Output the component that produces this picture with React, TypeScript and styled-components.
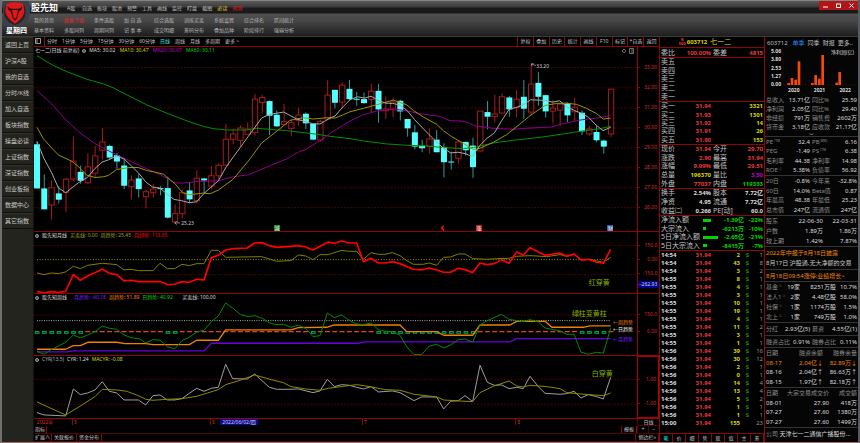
import React from "react";
import styled, { createGlobalStyle } from "styled-components";

const GlobalStyle = createGlobalStyle`
  * { box-sizing: border-box; }
  html, body { margin: 0; background: #000; }
  body { font-family: "Noto Sans", "Noto Sans CJK SC", sans-serif; }
  button {
    appearance: none; border: 0; margin: 0; padding: 0; background: none;
    font: inherit; color: inherit; cursor: pointer; white-space: nowrap;
  }
`;

const RED = "#e83a3a";
const LINE = "#8a0808";
const YELLOW = "#d6d600";
const GREEN = "#00d400";
const MAGENTA = "#c400c4";
const WHITE = "#dcdcdc";

const share = (weight: number) => `${weight} ${weight} ${weight}px`;

/* ---------- frame ---------- */

const Shell = styled.div`
  height: 100vh;
  display: flex;
  flex-direction: column;
  overflow: hidden;
  border-left: 2px solid #70706c;
  border-right: 2px solid #555b60;
  border-bottom: 1px solid #9a7070;
  background: #000;
  color: ${WHITE};
`;

const Header = styled.header`
  flex: 0 0 37px;
  display: grid;
  grid-template-columns: 29px minmax(0, 1fr);
  border-top: 1px solid #85857f;
  border-bottom: 1px solid #3a3a3a;
  background: linear-gradient(#5a5a5a 0, #3a3a3a 6px, #1b1b1b 7px, #191919 12px, #505050 13px, #464646 20px, #1e1e1e 35px);
`;

const Brand = styled.div`
  display: flex;
  flex-direction: column;
  align-items: center;
  font-size: 7px;
  line-height: 10px;
  font-weight: 700;
  color: #fff;
`;

const LogoSvg = styled.svg`
  display: block;
  width: 28px;
  height: 25px;
`;

const HeaderRows = styled.div`
  display: flex;
  flex-direction: column;
`;

const TitleRow = styled.div`
  display: flex;
  height: 13px;
`;

const AppName = styled.h1`
  margin: 0;
  width: 36px;
  font-size: 9px;
  line-height: 13px;
  font-weight: 700;
  color: #fff;
`;

const Menu = styled.nav`
  display: flex;
  gap: 5px;
  font-size: 5px;
  line-height: 14px;
`;

const MenuItem = styled.button<{ $color?: string }>`
  min-width: 10px;
  text-align: left;
  color: ${(p) => p.$color ?? "#c0c0c0"};
`;

const WindowButtons = styled.div`
  display: flex;
  margin-left: auto;
  height: 9px;
  background: #b01616;
`;

const WindowButton = styled.button`
  width: 13px;
  display: grid;
  place-items: center;
  svg { display: block; width: 7px; height: 7px; }
`;

const ToolGrid = styled.nav`
  display: grid;
  grid-template-columns: repeat(9, 30px);
  grid-auto-rows: 10px;
  padding: 1px 0 0 3px;
  font-size: 5px;
  line-height: 10px;
`;

const ToolItem = styled.button<{ $hot?: boolean }>`
  text-align: left;
  color: ${(p) => (p.$hot ? "#e02828" : "#b8b8b8")};
`;

const Body = styled.div`
  flex: 1;
  min-height: 0;
  display: grid;
  grid-template-columns: 32px minmax(0, 1fr) 106px 93px;
`;

const Sidebar = styled.nav`
  display: grid;
  grid-template-rows: repeat(12, minmax(0, 16fr)) 212fr;
  background: #24241e;
  border-right: 1px solid #14140f;
`;

const SideItem = styled.button`
  border-bottom: 1px solid #0e0e0b;
  border-top: 1px solid #33332c;
  font-size: 6px;
  line-height: 8px;
  text-align: left;
  padding-left: 3px;
  color: #cacac4;
`;

/* ---------- charts column ---------- */

const Charts = styled.main`
  display: flex;
  flex-direction: column;
  min-width: 0;
  min-height: 0;
  font-size: 5px;
  line-height: 7px;
`;

const TabBar = styled.div`
  flex: ${share(10)};
  min-height: 0;
  display: flex;
  align-items: stretch;
  border-bottom: 1px solid ${LINE};
`;

const PeriodTabs = styled.div`
  display: flex;
  gap: 5px;
  padding-left: 2px;
  border-left: 1px solid ${LINE};
`;

const BarIcon = styled.svg`
  display: block;
  width: 6px;
  height: 6px;
  margin: 1px 3px 0 1px;
`;

const PeriodTab = styled.button<{ $active?: boolean }>`
  color: ${(p) => (p.$active ? "#38e8e8" : "#c4c4c4")};
`;

const ActionTabs = styled.div`
  margin-left: auto;
  flex: 0 0 142px;
  display: grid;
  grid-template-columns: repeat(9, 1fr);
`;

const ActionTab = styled.button`
  border-left: 1px solid ${LINE};
  color: #c8c8c8;
`;

const Pane = styled.section<{ $weight: number }>`
  flex: ${(p) => share(p.$weight)};
  min-height: 0;
  display: grid;
  grid-template-columns: minmax(0, 1fr) 22px;
  grid-template-rows: minmax(0, 1fr);
  border-bottom: 1px solid ${LINE};
`;

const Plot = styled.div`
  position: relative;
  min-height: 0;
`;

const PlotSvg = styled.svg`
  position: absolute;
  inset: 0;
  width: 100%;
  height: 100%;
`;

const Caption = styled.div`
  position: absolute;
  left: 1px;
  top: 0;
  display: flex;
  gap: 3px;
  align-items: center;
  white-space: pre;
`;

const CaptionDot = styled.i`
  width: 4px;
  height: 4px;
  border-radius: 50%;
  border: 1px solid #999;
  background: #444;
`;

const Tint = styled.span<{ $color: string }>`
  color: ${(p) => p.$color};
`;

const Note = styled.span<{ $x: string; $y: string; $color: string; $size?: number }>`
  position: absolute;
  left: ${(p) => p.$x};
  top: ${(p) => p.$y};
  font-size: ${(p) => p.$size ?? 5}px;
  line-height: 8px;
  margin-top: -4px;
  color: ${(p) => p.$color};
  white-space: nowrap;
`;

const CornerIcons = styled.svg`
  position: absolute;
  right: 2px;
  top: 1px;
  width: 14px;
  height: 6px;
`;

const Badge = styled(Note)<{ $bg: string }>`
  width: 6px;
  height: 6px;
  margin: -3px 0 0 -3px;
  line-height: 6px;
  text-align: center;
  background: ${(p) => p.$bg};
`;

const Axis = styled.div<{ $rows: string; $boxed?: boolean }>`
  display: grid;
  grid-template-rows: ${(p) => p.$rows};
  border-left: 1px solid ${LINE};
  ${(p) => p.$boxed && `border: 1px solid #b00000;`}
`;

const AxisLabel = styled.span<{ $row?: number; $marked?: boolean }>`
  grid-row: ${(p) => p.$row ?? "auto"};
  align-self: center;
  display: flex;
  align-items: center;
  justify-content: space-between;
  padding-right: 2px;
  color: ${(p) => (p.$marked ? "#d8d8f0" : "#dc2c2c")};
  background: ${(p) => (p.$marked ? "#00008c" : "none")};
  &::before { content: ""; width: 2px; height: 1px; background: ${LINE}; }
`;

const TimeRow = styled.div`
  flex: ${share(7)};
  min-height: 0;
  display: grid;
  grid-template-columns: minmax(0, 1fr) 22px;
  color: #dc2c2c;
`;

const TimeTrack = styled.div`
  position: relative;
`;

const TimeMark = styled.span<{ $marked?: boolean; $tick?: boolean }>`
  position: absolute;
  top: 0;
  line-height: 6px;
  padding-left: 1px;
  white-space: nowrap;
  ${(p) => p.$tick && `border-left: 1px solid ${LINE};`}
  ${(p) => p.$marked && `background: #0a0a96; color: #c8c8f0; padding: 0 2px;`}
`;

const AxisCell = styled.button`
  border: 1px solid #500505;
  border-width: 0 0 1px 1px;
  color: #c4c4c4;
  line-height: 6px;
`;

const FooterRow = styled.div`
  flex: ${share(8)};
  min-height: 0;
  display: flex;
  border-bottom: 1px solid #500505;
`;

const FooterTab = styled.button<{ $push?: boolean }>`
  padding: 0 1px;
  border-right: 1px solid ${LINE};
  margin-left: ${(p) => (p.$push ? "auto" : "0")};
  ${(p) => p.$push && `border-left: 1px solid ${LINE};`}
  color: #c8c8c8;
  & + & { padding: 0 2px; }
`;

const ZoomButton = styled.button`
  width: 11px;
  border-left: 1px solid #500505;
  color: #ccc;
`;

/* ---------- quote column ---------- */

const Quote = styled.aside`
  display: flex;
  flex-direction: column;
  min-height: 0;
  border: 1px solid ${LINE};
  border-width: 0 1px;
  font-size: 6px;
  line-height: 8px;
  font-weight: 700;
`;

const QuoteTitle = styled.h2`
  flex: ${share(11)};
  min-height: 0;
  margin: 0;
  padding-right: 14px;
  display: flex;
  align-items: center;
  justify-content: center;
  gap: 1px;
  font-size: 6px;
  border-bottom: 1px solid ${LINE};
  color: ${YELLOW};
  span { margin-left: 2px; font-size: 7px; font-weight: 400; }
`;

const RiskMark = styled.small`
  font-size: 4px;
  line-height: 4px;
  text-align: center;
  color: ${RED};
  width: 7px;
`;

const Table = styled.table<{ $weight: number; $cols: string; $line?: string }>`
  flex: ${(p) => share(p.$weight)};
  min-height: 0;
  display: flex;
  flex-direction: column;
  border-bottom: 1px solid ${(p) => p.$line ?? LINE};
  tbody { flex: 1; min-height: 0; display: grid; grid-auto-rows: minmax(0, 1fr); }
  tr { display: grid; grid-template-columns: ${(p) => p.$cols}; align-items: center; }
`;

const Label = styled.th<{ $right?: boolean; $small?: boolean }>`
  padding: 0 1px;
  font-size: ${(p) => (p.$small ? 6 : 7)}px;
  font-weight: 400;
  text-align: ${(p) => (p.$right ? "right" : "left")};
  white-space: nowrap;
  color: ${(p) => (p.$small ? "#8c8c8c" : "#c4c4c4")};
  sup { font-size: 3px; line-height: 3px; vertical-align: 2px; margin-left: 1px; }
`;

const Value = styled.td<{ $color?: string; $left?: boolean; $light?: boolean }>`
  padding: 0 1px 0 ${(p) => (p.$left ? 1 : 0)}px;
  text-align: ${(p) => (p.$left ? "left" : "right")};
  white-space: nowrap;
  font-weight: ${(p) => (p.$light ? 400 : "inherit")};
  color: ${(p) => p.$color ?? WHITE};
`;

const FlowBar = styled.i`
  display: block;
  height: 3px;
  background: ${GREEN};
`;

const Spacer = styled.div<{ $weight: number }>`
  flex: ${(p) => share(p.$weight)};
`;

const QuoteTabs = styled.div`
  flex: ${share(9)};
  min-height: 0;
  display: grid;
  grid-template-columns: repeat(8, 1fr);
  border-top: 1px solid ${LINE};
  font-weight: 400;
`;

const QuoteTab = styled.button<{ $active?: boolean }>`
  border-right: 1px solid ${LINE};
  font-size: 5px;
  line-height: 7px;
  color: ${(p) => (p.$active ? "#30e0e0" : "#c0c0c0")};
`;

/* ---------- info column ---------- */

const RULE = "#333";

const Info = styled.aside`
  display: flex;
  flex-direction: column;
  min-height: 0;
  overflow: hidden;
  background: #050505;
  font-size: 6px;
  line-height: 8px;
`;

const InfoTabs = styled.div`
  flex: ${share(11)};
  min-height: 0;
  display: flex;
  align-items: center;
  gap: 3px;
  padding-left: 2px;
  color: #bbb;
  white-space: nowrap;
  strong { font-weight: 400; margin-right: 2px; }
`;

const InfoTab = styled.button<{ $active?: boolean }>`
  color: ${(p) => (p.$active ? "#2c84e8" : "#bbb")};
`;

const Profit = styled.figure`
  flex: ${share(47)};
  min-height: 0;
  margin: 0;
  padding-bottom: 2px;
  position: relative;
  display: grid;
  grid-template-columns: 16px minmax(0, 1fr);
  grid-template-rows: minmax(0, 1fr) 6px;
  font-size: 5px;
  line-height: 6px;
  font-weight: 700;
`;

const ProfitAxis = styled.div`
  display: flex;
  flex-direction: column;
  justify-content: space-between;
  text-align: right;
`;

const ProfitYears = styled.div`
  grid-column: 2;
  display: grid;
  grid-template-columns: repeat(3, 1fr);
  text-align: center;
`;

const ProfitLegend = styled.figcaption`
  position: absolute;
  right: 4px;
  top: 1px;
  font-weight: 400;
`;

const ProfitPlot = styled.div`
  position: relative;
`;

const More = styled.button`
  flex: ${share(4)};
  min-height: 0;
  border-bottom: 1px solid ${RULE};
  display: grid;
  place-items: center;
  svg { display: block; width: 5px; height: 3px; }
`;

const NewsBlock = styled.div<{ $weight: number }>`
  flex: ${(p) => share(p.$weight)};
  min-height: 0;
  display: flex;
  flex-direction: column;
  justify-content: space-evenly;
  border-bottom: 1px solid ${RULE};
  padding-left: 1px;
`;

const NewsLink = styled.a<{ $hot?: boolean }>`
  color: ${(p) => (p.$hot ? "#f08a0a" : "#c8c8c8")};
  text-decoration: none;
  white-space: nowrap;
`;

const Company = styled.div`
  flex: ${share(14)};
  min-height: 0;
  overflow: hidden;
  padding: 2px 0 0 1px;
  white-space: nowrap;
  color: ${WHITE};
`;

/* ---------- data (plot units: three per pixel) ---------- */

const STEP = 21.8;
const X0 = 111;
const barX = (i: number) => X0 + STEP * i;

// [rising, high, body top, body bottom, low]
const candles: number[][] = [
  [0,305,314,447,447],[0,405,447,510,510],[1,423,445,497,540],[0,440,462,481,492],[1,415,419,459,519],
  [1,291,365,419,425],[0,378,397,424,433],[1,341,382,430,434],[1,320,349,401,412],[1,265,307,332,360],
  [0,315,319,354,360],[0,340,347,366,388],[0,355,378,439,449],[1,408,422,442,480],[0,404,417,449,474],
  [1,450,457,472,507],[1,434,449,460,474],[0,440,446,449,468],[0,412,446,535,538],[1,495,523,548,550],
  [1,450,460,523,538],[0,428,453,480,492],[1,392,416,484,492],[0,415,417,423,462],[1,380,409,440,450],
  [1,372,377,409,420],[1,253,299,377,377],[1,267,283,299,314],[1,257,265,302,320],[1,248,268,284,285],
  [1,162,178,278,288],[1,165,173,188,221],[0,182,184,228,286],[0,212,225,260,262],[1,192,246,254,256],
  [1,237,249,266,290],[1,204,226,242,258],[0,218,222,251,268],[0,250,252,300,302],[1,240,245,301,307],
  [1,121,166,238,242],[0,150,150,189,206],[1,128,136,187,205],[0,120,147,178,181],[0,157,177,180,198],
  [0,158,178,190,192],[1,132,154,179,218],[0,132,153,209,249],[1,170,208,213,238],[1,173,187,210,233],
  [0,180,183,215,242],[0,238,238,266,291],[0,256,278,321,329],[0,300,318,326,338],[1,267,298,320,342],
  [0,271,300,338,338],[0,311,322,368,414],[0,336,366,369,390],[1,303,307,356,372],[0,306,307,332,348],
  [0,294,318,383,415],[1,214,214,334,336],[0,184,217,231,269],[1,165,223,230,248],[1,160,171,220,222],
  [0,168,173,209,231],[1,151,178,203,233],[0,120,171,207,237],[1,75,133,217,228],[0,96,129,171,198],
  [0,165,166,215,234],[1,180,205,214,251],[1,190,193,211,258],[0,188,191,227,247],[1,174,202,216,244],
  [0,212,219,275,286],[1,258,268,283,290],[0,256,277,302,308],[0,300,303,321,342],[1,148,148,283,293],
];

const ma60 = "111,47 155,74 200,95 260,118 310,132 340,144 400,175 440,195 480,212 530,232 570,247 610,260 640,267 680,271 740,271 770,266 810,269 860,273 960,285 990,290 1050,297 1090,304 1160,313 1220,317 1280,319 1330,324 1390,327 1420,324 1480,310 1540,302 1620,293 1690,283 1740,275 1800,267 1832,260";
const ma20 = "111,152 155,192 195,238 235,276 285,312 330,336 400,369 440,388 480,405 525,430 550,431 590,426 655,424 700,412 745,406 800,383 860,358 895,338 920,328 960,303 1000,275 1050,244 1090,225 1130,214 1180,208 1220,213 1260,222 1320,230 1350,243 1385,244 1405,249 1425,259 1440,260 1480,266 1540,269 1590,265 1655,262 1690,252 1740,241 1790,235 1815,231 1832,226";
const ma10 = "111,263 130,297 155,325 175,346 215,365 235,381 260,407 285,414 310,412 325,408 350,390 390,384 415,384 440,393 460,397 490,404 525,433 548,460 568,466 610,461 630,463 655,452 700,419 750,358 785,310 840,267 870,242 910,234 940,238 980,234 1005,235 1030,225 1050,216 1090,206 1130,195 1180,181 1220,195 1240,212 1270,232 1310,254 1330,273 1355,291 1390,311 1420,330 1440,326 1480,308 1520,285 1560,253 1590,228 1635,197 1670,191 1700,190 1730,194 1760,206 1790,222 1810,238 1832,235";
const ma5 = "111,306 132,357 155,400 175,445 197,460 235,430 262,414 285,387 306,368 325,361 350,350 372,358 395,380 415,400 437,427 458,443 480,446 500,463 522,480 545,484 568,490 590,487 610,464 632,444 655,424 677,385 700,352 745,290 785,235 808,224 851,217 890,238 938,252 960,253 990,235 1005,229 1030,200 1050,180 1072,171 1095,175 1113,169 1135,182 1157,190 1178,191 1200,196 1222,213 1244,240 1287,285 1310,307 1330,326 1352,340 1374,338 1395,342 1417,351 1439,318 1461,296 1483,280 1505,243 1527,209 1549,203 1570,195 1592,180 1636,182 1657,187 1679,183 1701,202 1723,212 1745,221 1766,233 1788,256 1809,273 1832,263";

const monthYellow = "111,147 132,152 154,147 175,149 197,144 220,127 241,134 263,124 307,118 350,122 372,138 393,136 415,140 459,140 480,118 502,134 524,134 546,121 568,125 590,119 612,119 634,79 655,79 677,100 785,98 830,112 873,110 895,93 917,96 939,107 960,92 985,92 1025,79 1045,82 1070,82 1090,106 1113,86 1135,91 1155,91 1177,86 1200,95 1220,110 1240,121 1270,121 1287,117 1310,124 1331,100 1352,99 1375,90 1395,90 1418,104 1460,106 1490,104 1527,103 1550,97 1590,95 1640,98 1680,92 1700,97 1722,91 1743,108 1770,106 1790,111 1810,115 1832,100";
const monthRed = "111,203 132,207 154,203 175,206 197,202 220,152 241,169 263,156 307,136 328,148 350,152 372,171 393,169 415,173 480,173 502,182 524,181 546,173 568,175 590,166 612,168 634,101 655,94 677,78 700,74 742,72 764,57 787,56 808,65 830,70 873,67 895,65 917,69 939,78 985,54 1003,58 1025,51 1048,57 1070,57 1090,113 1113,103 1135,117 1157,117 1177,113 1200,119 1220,128 1240,136 1265,138 1287,132 1310,138 1331,145 1352,145 1375,133 1395,137 1418,146 1440,117 1460,122 1483,119 1505,107 1527,118 1550,84 1570,93 1590,71 1635,94 1680,87 1700,97 1722,90 1743,108 1765,106 1790,115 1810,118 1832,76";

const weekGreen = "111,382 132,391 154,377 197,355 220,333 241,342 263,333 285,323 307,306 328,313 350,316 372,333 393,341 420,345 437,357 459,347 480,349 502,368 524,375 546,350 568,340 590,324 612,319 634,293 655,276 677,237 700,254 722,272 745,278 764,275 787,283 808,297 830,302 850,301 873,310 895,304 917,313 939,338 960,335 982,267 1003,281 1025,273 1048,289 1070,300 1090,302 1113,297 1135,317 1155,322 1177,323 1200,334 1220,368 1242,392 1265,392 1287,367 1310,361 1331,372 1352,363 1375,347 1395,345 1418,355 1440,303 1462,290 1505,271 1527,286 1570,293 1590,287 1615,294 1635,312 1680,321 1700,331 1722,331 1743,385 1765,391 1790,385 1810,388 1832,313";
const weekOrange = "111,376 197,376 220,365 241,365 263,355 350,355 375,359 437,359 460,362 568,362 590,349 655,349 677,318 873,318 895,311 980,310 1003,303 1200,303 1220,323 1310,323 1331,334 1418,334 1440,303 1530,303 1550,292 1635,292 1656,310 1750,310 1770,306 1832,306";
const weekPurple = "111,384 200,384 220,381 612,381 634,358 1075,358 1095,354 1530,354 1550,344 1832,344";
const greenBars = (i: number) => i <= 6 || i === 18 || i === 19 || i === 38 || (i >= 47 && i <= 60) || (i >= 75 && i <= 78);

const cyrWhite = "111,566 132,573 197,576 220,495 241,512 263,507 285,498 307,473 328,502 350,507 372,528 415,528 437,543 459,515 480,513 502,528 524,528 546,524 568,508 590,493 612,502 634,493 655,490 677,421 698,464 742,465 764,450 808,490 830,496 873,496 895,495 939,506 960,501 982,466 1003,488 1025,482 1048,484 1070,490 1090,495 1113,488 1135,504 1177,501 1200,506 1242,530 1265,519 1310,519 1331,555 1352,532 1375,530 1395,515 1418,533 1440,424 1462,475 1483,484 1505,483 1527,494 1550,490 1570,494 1590,457 1615,488 1635,508 1680,511 1700,509 1722,502 1743,522 1765,512 1790,518 1810,525 1832,460";
const cyrYellow = "111,534 150,552 197,573 240,547 285,518 307,496 350,498 380,502 410,513 437,526 459,529 502,526 546,524 590,517 620,508 655,497 677,482 720,469 764,453 810,466 850,476 873,488 917,495 960,499 985,493 1070,482 1110,488 1155,497 1200,499 1242,511 1310,519 1331,528 1375,531 1418,533 1440,506 1480,487 1527,471 1550,486 1570,489 1590,484 1640,488 1680,494 1700,506 1740,510 1780,513 1810,515 1832,507";

type LineProps = { points: string; color: string; width?: number };
const Curve = ({ points, color, width = 3 }: LineProps) => (
  <polyline points={points} fill="none" stroke={color} strokeWidth={width} strokeLinejoin="round" />
);

const Grid = ({ ys }: { ys: number[] }) => (
  <g stroke="#4a0505" strokeWidth={3} strokeDasharray="6 4">
    {ys.map((y) => <line key={y} x1={102} x2={1911} y1={y} y2={y} />)}
  </g>
);

const PricePlot = () => (
  <PlotSvg viewBox="102 21 1809 555" preserveAspectRatio="none" aria-hidden="true">
    <Grid ys={[83, 144, 205, 265, 325, 385, 445, 505]} />
    {candles.map(([up, high, top, bottom, low], i) => {
      const x = barX(i);
      return up ? (
        <g key={i} stroke="#a81c1c" strokeWidth={3} fill="none">
          <path d={`M${x} ${high}V${top}M${x} ${bottom}V${low}`} />
          <rect x={x - 8} y={top} width={16} height={Math.max(3, bottom - top)} />
        </g>
      ) : (
        <g key={i}>
          <line x1={x} x2={x} y1={high} y2={low} stroke="#2a9c9c" strokeWidth={3} />
          <rect x={x - 9} y={top} width={18} height={bottom - top} fill="#54ffff" />
        </g>
      );
    })}
    <Curve points={ma60} color="#009000" />
    <Curve points={ma20} color="#8c008c" />
    <Curve points={ma10} color="#969600" />
    <Curve points={ma5} color="#a8a8a8" />
    <path d="M540 551h-16l6-5m-6 5l6 5M1608 77l-14-5m2 7l-2-7 7-1" fill="none" stroke="#bbb" strokeWidth={2} />
    <path d="M1331 561q-9 2-3 8t0 8m-4-9l8 2" fill="none" stroke="#f01818" strokeWidth={4} />
  </PlotSvg>
);

const Cap = ({ children }: { children: React.ReactNode }) => (
  <Caption><CaptionDot />{children}</Caption>
);

const ChartsColumn = () => (
  <Charts>
    <TabBar>
      <BarIcon viewBox="0 0 12 12"><path d="M1 1h10v10H1zM4 1v10M11 3v6" fill="none" stroke="#999" strokeWidth="2" /></BarIcon>
      <PeriodTabs>
        {["分时", "1分钟", "5分钟", "15分钟", "30分钟", "60分钟", "日线", "周线", "月线", "多周期", "更多 >"].map((t) => (
          <PeriodTab key={t} $active={t === "日线"}>{t}</PeriodTab>
        ))}
      </PeriodTabs>
      <ActionTabs>
        {["复权", "叠加", "历史", "统计", "画线", "F10", "标记", "*自选", "返回"].map((t) => <ActionTab key={t}>{t}</ActionTab>)}
      </ActionTabs>
    </TabBar>

    <Pane $weight={186}>
      <Plot>
        <PricePlot />
        <Caption>
          <span>七一二(日线 前复权)</span><CaptionDot />
          <span>MA5: 30.02 </span><Tint $color={YELLOW}>MA10: 30.47 </Tint>
          <Tint $color={MAGENTA}>MA20: 30.67 </Tint><Tint $color={GREEN}>MA60: 30.11</Tint>
        </Caption>
        <CornerIcons viewBox="0 0 14 6" aria-hidden="true">
          <path d="M3 1l2 2-2 2-2-2zM8.500 .5h4v5h-4zM11 .5v5" fill="none" stroke="#888" strokeWidth=".8" />
        </CornerIcons>
        <Note $x="24.4%" $y="95.5%" $color="#ccc">25.23</Note>
        <Note $x="83.3%" $y="10.3%" $color="#ccc">33.20</Note>
        <Badge $x="40.3%" $y="98%" $color="#fff" $bg="#1c8c28">减</Badge>
        <Badge $x="73.8%" $y="98%" $color="#fff" $bg="#b02020">涨</Badge>
        <Badge $x="95.6%" $y="98%" $color="#fff" $bg="#2860a8">财</Badge>
      </Plot>
      <Axis $rows="11fr repeat(8, 20fr) 14fr">
        {["33.00", "32.00", "31.00", "30.00", "29.00", "28.00", "27.00", "26.00"].map((t, i) => (
          <AxisLabel key={t} $row={i + 2}>{t}</AxisLabel>
        ))}
      </Axis>
    </Pane>

    <Pane $weight={62}>
      <Plot>
        <PlotSvg viewBox="102 24 1809 183" preserveAspectRatio="none" aria-hidden="true">
          <Grid ys={[65, 152]} />
          <line x1={111} x2={1832} y1={107} y2={107} stroke="#909000" strokeWidth={3} strokeDasharray="3 5" />
          <Curve points={monthYellow} color="#808000" />
          <Curve points={monthRed} color="#ff0000" width={5} />
        </PlotSvg>
        <Cap>
          <span>股先知月线</span><Tint $color="#a0a000">买卖线: 0.00</Tint>
          <Tint $color="#a0a000">周趋势: 25.45</Tint><Tint $color="#ff0000">月趋势: 113.65</Tint>
        </Cap>
        <Note $x="92%" $y="83%" $color="#8cae00" $size={7}>红穿黄</Note>
      </Plot>
      <Axis $rows="6fr 15fr 14fr 15fr 7fr 5fr">
        <AxisLabel $row={2}>150.0</AxisLabel>
        <AxisLabel $row={3}>0.00</AxisLabel>
        <AxisLabel $row={4}>-150.0</AxisLabel>
        <AxisLabel $row={5} $marked>-262.93</AxisLabel>
      </Axis>
    </Pane>

    <Pane $weight={62}>
      <Plot>
        <PlotSvg viewBox="102 210 1809 183" preserveAspectRatio="none" aria-hidden="true">
          <Grid ys={[273]} />
          <line x1={111} x2={1832} y1={290} y2={290} stroke="#b0b0b0" strokeWidth={3} strokeDasharray="3 4" />
          {candles.map((_, i) => greenBars(i) ? (
            <rect key={i} x={barX(i) - 5} y={323} width={11} height={5} fill="none" stroke="#00b050" strokeWidth={3} />
          ) : (
            <rect key={i} x={barX(i) - 8} y={321} width={15} height={4} fill="#d84424" />
          ))}
          <Curve points={weekPurple} color="#6800e0" width={4} />
          <Curve points={weekOrange} color="#f08000" width={4} />
          <Curve points={weekGreen} color="#008c00" />
        </PlotSvg>
        <Cap>
          <Tint $color={WHITE}>{"股先知周线   "}</Tint><Tint $color="#7c20ff">月趋势: -60.18</Tint>
          <Tint $color="#f08000">周趋势: 51.89</Tint><Tint $color={GREEN}>{"日趋势: 40.92     "}</Tint>
          <span>买卖线: 100.00</span>
        </Cap>
        <Note $x="89.2%" $y="32%" $color="#8cae00" $size={7}>绿柱变黄柱</Note>
        <Note $x="96%" $y="45%" $color="#f08000">←周趋势</Note>
        <Note $x="96%" $y="57%" $color="#ffffff">←日趋势</Note>
        <Note $x="96%" $y="73%" $color="#7c20ff">←月趋势</Note>
      </Plot>
      <Axis $rows="12fr 17fr 17fr 15fr">
        <AxisLabel $row={2}>150.0</AxisLabel>
        <AxisLabel $row={3}>0.00</AxisLabel>
      </Axis>
    </Pane>

    <Pane $weight={63}>
      <Plot>
        <PlotSvg viewBox="102 396 1809 186" preserveAspectRatio="none" aria-hidden="true">
          <Grid ys={[466, 541]} />
          <Curve points={cyrWhite} color="#a0a0a0" />
          <Curve points={cyrYellow} color="#8c8c00" />
        </PlotSvg>
        <Cap>
          <Tint $color="#b0b0b0">CYR(13,5)</Tint><span>CYR: 1.24</span><Tint $color={YELLOW}>MACYR: -0.08</Tint>
        </Cap>
        <Note $x="92.5%" $y="29%" $color="#8cae00" $size={7}>白穿黄</Note>
      </Plot>
      <Axis $boxed $rows="11fr 25fr 25fr 1fr">
        <AxisLabel $row={2}>1.00</AxisLabel>
        <AxisLabel $row={3}>-1.00</AxisLabel>
      </Axis>
    </Pane>

    <TimeRow>
      <TimeTrack>
        {[["0.3%", "2022年"], ["6.3%", "5"], ["29.2%", "6"], ["54.4%", "7"], ["79.8%", "8"]].map(([left, t]) => (
          <TimeMark key={t} style={{ left }} $tick={t.length === 1}>{t}</TimeMark>
        ))}
        <TimeMark style={{ left: "30.9%" }} $marked>2022/06/02/四</TimeMark>
      </TimeTrack>
      <AxisCell>日线</AxisCell>
    </TimeRow>
    <FooterRow>
      <FooterTab>指标</FooterTab>
      <FooterTab $push>模板</FooterTab>
      <ZoomButton aria-label="放大">+</ZoomButton>
      <ZoomButton aria-label="缩小">−</ZoomButton>
    </FooterRow>
    <FooterRow>
      <FooterTab>扩展∧</FooterTab>
      <FooterTab>关联报价</FooterTab>
      <FooterTab>资金分布</FooterTab>
      <FooterTab $push>侧边栏»</FooterTab>
    </FooterRow>
  </Charts>
);

/* ---------- quote data ---------- */

const buys = [["买一", "31.94", "3321"], ["买二", "31.93", "1301"], ["买三", "31.92", "14"], ["买四", "31.91", "26"], ["买五", "31.90", "153"]];

const prices: string[][] = [
  ["现价", "31.94", RED, "今开", "29.70", RED],
  ["涨跌", "2.90", RED, "最高", "31.94", RED],
  ["涨幅", "9.99%", RED, "最低", "29.51", RED],
  ["总量", "196370", YELLOW, "量比", "3.50", "#c000c0"],
  ["外盘", "77037", RED, "内盘", "119333", GREEN],
];
const shares: string[][] = [
  ["换手", "2.54%", WHITE, "股本", "7.72亿", WHITE],
  ["净资", "4.95", WHITE, "流通", "7.72亿", WHITE],
  ["收益㈡", "0.266", WHITE, "PE[动]", "60.0", WHITE],
];
const flows: [string, number, string, string][] = [
  ["净流入额", 8, "-1.39亿", "-22%"], ["大宗流入", 3, "-6213万", "-10%"],
  ["5日净流入额", 15, "-2.65亿", "-21%"], ["5日大宗流入", 4, "-8415万", "-7%"],
];
const ticks = [
  ["14:54", 2, 1], ["14:54", 43, 8], ["14:54", 3, 2], ["14:55", 8, 1], ["14:55", 4, 1], ["14:55", 3, 1],
  ["14:55", 10, 1], ["14:55", 19, 1], ["14:55", 4, 1], ["14:55", 11, 2], ["14:55", 3, 1], ["14:55", 1, 1],
  ["14:56", 39, 16], ["14:56", 30, 12], ["14:56", 2, 1], ["14:56", 0, 1], ["14:56", 14, 4], ["14:56", 13, 4],
  ["14:56", 5, 2], ["14:56", 1, 1], ["14:56", 1, 1], ["15:00", 155, 23],
];

const PairRows = ({ rows }: { rows: string[][] }) => (
  <tbody>
    {rows.map(([a, av, ac, b, bv, bc]) => (
      <tr key={a}>
        <Label scope="row">{a}</Label><Value $color={ac}>{av}</Value>
        <Label scope="row">{b}</Label><Value $color={bc}>{bv}</Value>
      </tr>
    ))}
  </tbody>
);

const PAIR = "16px 36px minmax(0, 1fr) 30px";

const QuoteColumn = () => (
  <Quote>
    <QuoteTitle><RiskMark>R<br />500</RiskMark>603712<span>七一二</span></QuoteTitle>
    <Table $weight={10} $cols={PAIR}>
      <PairRows rows={[["委比", "100.00%", RED, "委差", "4815", RED]]} />
    </Table>
    <Table $weight={44} $cols="1fr">
      <tbody>{["卖五", "卖四", "卖三", "卖二", "卖一"].map((t) => <tr key={t}><Label scope="row">{t}</Label></tr>)}</tbody>
    </Table>
    <Table $weight={43} $cols="16px 36px 1fr">
      <tbody>
        {buys.map(([l, p, v]) => (
          <tr key={l}><Label scope="row">{l}</Label><Value $color={RED}>{p}</Value><Value $color={YELLOW}>{v}</Value></tr>
        ))}
      </tbody>
    </Table>
    <Table $weight={44} $cols={PAIR}><PairRows rows={prices} /></Table>
    <Table $weight={27} $cols={PAIR}><PairRows rows={shares} /></Table>
    <Table $weight={35} $cols="42px 15px 1fr 19px">
      <tbody>
        {flows.map(([l, w, v, p]) => (
          <tr key={l}>
            <Label scope="row">{l}</Label>
            <Value $left><FlowBar style={{ width: w }} /></Value>
            <Value $color={GREEN}>{v}</Value><Value $color={GREEN}>{p}</Value>
          </tr>
        ))}
      </tbody>
    </Table>
    <Table $weight={177} $cols="18px 34px 29px 9px 1fr" $line="#000">
      <tbody>
        {ticks.map(([t, v, n], i) => (
          <tr key={i}>
            <Value $left>{t}</Value><Value $color={RED}>31.94</Value>
            <Value $color={YELLOW}>{v}</Value>
            <Value $color={GREEN} $light>{i < 21 ? "S" : ""}</Value><Value $color="#909090" $light>{n}</Value>
          </tr>
        ))}
      </tbody>
    </Table>
    <Spacer $weight={5} />
    <QuoteTabs>
      {["笔", "价", "细", "势", "联", "值", "主", "筹"].map((t) => <QuoteTab key={t} $active={t === "笔"}>{t}</QuoteTab>)}
    </QuoteTabs>
  </Quote>
);

/* ---------- info data ---------- */

const finance = [
  ["总收入", "", "13.71亿", "同比%", "", "25.59"], ["净利润", "", "2.05亿", "同比%", "", "29.40"],
  ["非经损", "", "791万", "销售费", "", "2602万"], ["货币金", "", "3.18亿", "应收款", "", "21.17亿"],
];
const ratios = [
  ["PE", "TTM", "32.4", "PB", "MRQ", "6.16"], ["PEG", "", "-1.49", "PS", "TTM", "6.38"],
  ["毛利率", "", "44.38", "净利率", "", "14.98"], ["ROE", "①", "5.38%", "负债率", "", "56.92"],
];
const returns = [
  ["20日", "", "-0.8%", "今年来", "", "-32.8%"], ["60日", "", "14.0%", "Beta值", "", "0.87"],
  ["年最高", "", "48.38", "年最低", "", "25.23"], ["总市值", "", "247亿", "流通值", "", "247亿"],
];
const holders = [["股东", "22-06-30", "22-03-31"], ["户数", "1.89万", "1.86万"], ["较上期", "1.42%", "7.87%"]];
const funds = [
  ["基金", "①", "19家", "8251万股", "10.7%"], ["法人1", "①", "2家", "4.48亿股", "58.0%"],
  ["社保", "①", "1家", "1174万股", "1.5%"], ["北上", "①", "1家", "749万股", "1.0%"],
];

const StatTable = ({ rows, weight, line }: { rows: string[][]; weight: number; line?: string }) => (
  <Table $weight={weight} $cols="20px 26px minmax(0, 1fr) 24px" $line={line ?? RULE}>
    <tbody>
      {rows.map(([a, as, av, b, bs, bv]) => (
        <tr key={a}>
          <Label scope="row" $small>{a}{as && <sup>{as}</sup>}</Label><Value>{av}</Value>
          <Label scope="row" $small>{b}{bs && <sup>{bs}</sup>}</Label><Value>{bv}</Value>
        </tr>
      ))}
    </tbody>
  </Table>
);

type DatedProps = { heads: string[]; rows: string[][]; cols: string; hot?: boolean };
const DatedTable = ({ heads, rows, cols, hot }: DatedProps) => (
  <Table $weight={40} $cols={cols} $line={RULE}>
    <tbody>
      <tr>{heads.map((h, i) => <Label key={h} scope="col" $small $right={i > 0}>{h}</Label>)}</tr>
      {rows.map((r, n) => (
        <tr key={n}>
          {r.map((c, i) => <Value key={i} $left={i === 0} $color={hot && n === 0 ? "#f08000" : WHITE}>{c}</Value>)}
        </tr>
      ))}
    </tbody>
  </Table>
);

const profitBars: [number, number][] = [
  [397, 145], [407, 130], [418, 135], [428, 80], [468, 145], [478, 121], [489, 132], [499, 61], [541, 144], [550, 112],
];

const InfoColumn = () => (
  <Info>
    <InfoTabs>
      <strong>603712</strong>
      <InfoTab $active>单季</InfoTab><InfoTab>同季</InfoTab><InfoTab>财报</InfoTab><InfoTab>更多..</InfoTab>
    </InfoTabs>
    <Profit>
      <ProfitAxis>{["5.06", "3.80", "2.53", "1.27", "0.00"].map((t) => <span key={t}>{t}</span>)}</ProfitAxis>
      <ProfitPlot>
        <PlotSvg viewBox="378 40 231 117" preserveAspectRatio="none" aria-hidden="true">
          <path d="M384 40V151H600" fill="none" stroke="#2a1010" strokeWidth="2" />
          {profitBars.map(([x, y]) => <rect key={x} x={x} y={y} width={8} height={151 - y} fill="#f84808" />)}
        </PlotSvg>
      </ProfitPlot>
      <ProfitYears><span>2020</span><span>2021</span><span>2022</span></ProfitYears>
      <ProfitLegend>净利润(亿)</ProfitLegend>
    </Profit>
    <StatTable rows={finance} weight={38} line="transparent" />
    <More aria-label="展开"><svg viewBox="0 0 10 6"><path d="M2 1l3 3 3-3" fill="none" stroke="#bbb" strokeWidth="1.5" /></svg></More>
    <StatTable rows={ratios} weight={39} />
    <StatTable rows={returns} weight={40} />
    <Table $weight={31} $cols="20px 1fr 34px" $line={RULE}>
      <tbody>
        {holders.map(([l, a, b]) => <tr key={l}><Label scope="row" $small>{l}</Label><Value>{a}</Value><Value>{b}</Value></tr>)}
      </tbody>
    </Table>
    <NewsBlock $weight={23}>
      <NewsLink href="#report" $hot>2022年中报于8月18日披露</NewsLink>
      <NewsLink href="#connect">8月17日 沪股通,无大净额的交易</NewsLink>
    </NewsBlock>
    <NewsBlock $weight={12}><NewsLink href="#limit" $hot>8月18日09:54涨停:业绩增长&gt;</NewsLink></NewsBlock>
    <Table $weight={41} $cols="21px 15px 1fr 21px" $line={RULE}>
      <tbody>
        {funds.map(([l, s, a, b, c]) => (
          <tr key={l}><Label scope="row" $small>{l}<sup>{s}</sup></Label><Value>{a}</Value><Value>{b}</Value><Value>{c}</Value></tr>
        ))}
      </tbody>
    </Table>
    <Table $weight={13} $cols="14px 32px 14px 1fr" $line={RULE}>
      <tbody><tr><Label scope="row" $small>分红</Label><Value>2.93亿(5)</Value><Label scope="row" $small>募资</Label><Value>4.55亿(1)</Value></tr></tbody>
    </Table>
    <Table $weight={12} $cols="26px 20px 26px 1fr" $line={RULE}>
      <tbody><tr><Label scope="row" $small>融资占比</Label><Value>0.91%</Value><Label scope="row" $small>融券占比</Label><Value>0.11%</Value></tr></tbody>
    </Table>
    <DatedTable hot cols="18px 1fr 34px" heads={["日期", "融资余额", "融券余量"]} rows={[["08-17", "2.04亿↓", "82.89万↓"], ["08-16", "2.04亿↑", "86.63万↑"], ["08-15", "1.97亿↑", "82.18万↑"]]} />
    <DatedTable cols="18px 1fr 28px" heads={["日期", "大宗交易成交价", "成交额"]} rows={[["08-01", "27.90", "418万"], ["07-27", "27.60", "1380万"], ["07-27", "27.60", "1499万"]]} />
    <Company><Tint $color="#8c8c8c">公司</Tint> 天津七一二通信广播股份...</Company>
  </Info>
);

/* ---------- page ---------- */

export default function App() {
  return (
    <>
      <GlobalStyle />
      <Shell>
        <Header>
          <Brand>
            <LogoSvg viewBox="0 0 84 75" role="img" aria-label="股先知">
              <path d="M0 0H76Q90 38 68 66Q64 75 54 75H0Z" fill="#3c4046" />
              <path d="M62 10Q72 28 66 46Q60 64 36 73Q12 64 5 46Q0 28 10 10Q36 2 62 10Z" fill="#15090a" opacity="0.55" />
              <path d="M10 9Q35-1 61 9L64 32Q61 51 36 68Q11 51 7 32Z" fill="#e01818" />
              <path d="M14 15Q13 28 23 31L30 53L36 59L42 53L48 31Q59 28 57 15Q54 23 45 23H27Q18 23 14 15Z" fill="#281416" />
              <path d="M27 27H45L43 36L40 50L36 53L32 50L29 36Z" fill="#e01818" />
            </LogoSvg>
            星期四
          </Brand>
          <HeaderRows>
            <TitleRow>
              <AppName>股先知</AppName>
              <Menu>
                {["A股", "自选", "板块", "股池", "预警", "工具", "画线", "监控", "盯盘", "截图"].map((t) => <MenuItem key={t}>{t}</MenuItem>)}
                <MenuItem $color="#f0c838">必读</MenuItem>
                <MenuItem $color="#e81414">预测</MenuItem>
              </Menu>
              <WindowButtons>
                <WindowButton aria-label="最小化"><svg viewBox="0 0 7 7"><path d="M1 5h5" stroke="#fff" /></svg></WindowButton>
                <WindowButton aria-label="最大化"><svg viewBox="0 0 7 7"><path d="M1 2h5M1.5 2v3.5h4V2" stroke="#fff" fill="none" /></svg></WindowButton>
                <WindowButton aria-label="关闭"><svg viewBox="0 0 7 7"><path d="M1.500 1.500l4 4m0-4l-4 4" stroke="#fff" /></svg></WindowButton>
              </WindowButtons>
            </TitleRow>
            <ToolGrid>
              {["我的首页", "数据下载", "条件选股", "加 自 选", "综合选股", "训练买卖", "系统设置", "综合排名", "区间统计",
                "基本资料", "多股同列", "周期同列", "记 事 本", "成交明细", "筹码分布", "叠加品种", "阶段排行", "强弱分析"].map((t) => (
                <ToolItem key={t} $hot={t === "数据下载"}>{t}</ToolItem>
              ))}
            </ToolGrid>
          </HeaderRows>
        </Header>
        <Body>
          <Sidebar>
            {["返回上页", "沪深A股", "我的自选", "分时/K线", "加入自选", "板块指数", "操盘必读", "上证指数", "深证指数", "创业板指", "数据中心", "其它指数"].map((t) => (
              <SideItem key={t}>{t}</SideItem>
            ))}
          </Sidebar>
          <ChartsColumn />
          <QuoteColumn />
          <InfoColumn />
        </Body>
      </Shell>
    </>
  );
}
